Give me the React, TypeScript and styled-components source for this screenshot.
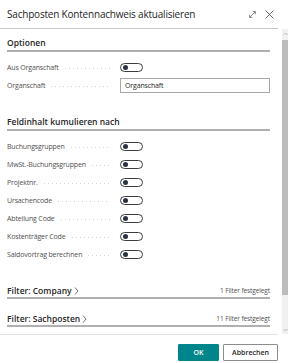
import styled, { createGlobalStyle } from "styled-components";

const GlobalStyle = createGlobalStyle`
  html, body {
    margin: 0;
    padding: 0;
    background: #ffffff;
  }
  body {
    font-family: "Open Sans", "Noto Sans", Arial, sans-serif;
    color: #212121;
  }
`;

const Dialog = styled.div`
  width: 288px;
  height: 363px;
  display: flex;
  flex-direction: column;
  overflow: hidden;
  background: #fff;
`;

const Header = styled.div`
  height: 28px;
  margin-right: 10px;
  padding-left: 7px;
  display: flex;
  align-items: center;
  border-bottom: 1px solid #c8c8c8;
`;

const Title = styled.div`
  flex: 1;
  font-size: 10px;
  letter-spacing: -0.2px;
  color: #262626;
`;

const HeaderIcons = styled.div`
  display: flex;
  align-items: center;
  gap: 9px;
  margin-right: 4px;
`;

const Body = styled.div`
  display: flex;
  height: 305px;
`;

const Content = styled.div`
  flex: 1;
  overflow: hidden;
  padding: 7px 12px 0 7px;
`;

const SectionTitle = styled.div<{ $top: number }>`
  margin-top: ${({ $top }) => $top}px;
  font-size: 8.5px;
  font-weight: 600;
  line-height: 14px;
  color: #262626;
  border-bottom: 2px solid #b0b0b0;
`;

const Rows = styled.div`
  padding-top: 6px;
  display: flex;
  flex-direction: column;
`;

const Row = styled.div`
  height: 18px;
  display: flex;
  align-items: center;
`;

const Label = styled.div`
  width: 113px;
  display: flex;
  align-items: center;
  font-size: 7px;
  letter-spacing: -0.15px;
  color: #505050;
  white-space: nowrap;
`;

const Leader = styled.span`
  flex: 1;
  height: 4px;
  margin: 0 10px 0 6px;
  background-image: linear-gradient(to right, #d2d2d2 1px, transparent 1px);
  background-size: 4px 1px;
  background-repeat: repeat-x;
  background-position: left bottom;
`;

const Toggle = styled.div`
  width: 19px;
  height: 7px;
  border: 1px solid #3c3c3c;
  border-radius: 5px;
  display: flex;
  align-items: center;
  padding-left: 2px;
  box-sizing: content-box;
`;

const Knob = styled.span`
  width: 5px;
  height: 5px;
  border-radius: 50%;
  background: #2b3240;
`;

const Input = styled.div`
  width: 150px;
  height: 15px;
  box-sizing: border-box;
  border: 1px solid #a8a8a8;
  padding-left: 4px;
  display: flex;
  align-items: center;
  font-size: 7px;
  letter-spacing: -0.15px;
  color: #262626;
`;

const FilterRow = styled.div<{ $top: number }>`
  margin-top: ${({ $top }) => $top}px;
  display: flex;
  align-items: center;
  justify-content: space-between;
  line-height: 13px;
  border-bottom: 2px solid #b0b0b0;
`;

const FilterTitle = styled.div`
  display: flex;
  align-items: center;
  gap: 2px;
  font-size: 8.5px;
  font-weight: 600;
  color: #262626;
`;

const FilterCount = styled.div`
  font-size: 6.5px;
  letter-spacing: -0.1px;
  color: #505050;
`;

const Scrollbar = styled.div`
  width: 6px;
  background: #f0f0f0;
  display: flex;
  flex-direction: column;
  align-items: center;
`;

const Thumb = styled.div`
  width: 6px;
  height: 255px;
  margin: 4px 0 33px;
  background: #bcbcbc;
`;

const Footer = styled.div`
  margin-right: 10px;
  border-top: 1px solid #e3e3e3;
  padding-top: 9px;
  display: flex;
  justify-content: flex-end;
  gap: 4px;
`;

const Button = styled.button<{ $primary?: boolean }>`
  height: 17px;
  width: ${({ $primary }) => ($primary ? 41 : 55)}px;
  padding: 0;
  font-family: "Open Sans", "Noto Sans", Arial, sans-serif;
  font-size: 7px;
  font-weight: 600;
  border: 1px solid ${({ $primary }) => ($primary ? "#00858a" : "#8c8c8c")};
  background: ${({ $primary }) => ($primary ? "#00858a" : "#ffffff")};
  color: ${({ $primary }) => ($primary ? "#ffffff" : "#262626")};
  border-radius: 1px;
`;

const toggles = [
  "Buchungsgruppen",
  "MwSt.-Buchungsgruppen",
  "Projektnr.",
  "Ursachencode",
  "Abteilung Code",
  "Kostenträger Code",
  "Saldovortrag berechnen",
];

const Chevron = () => (
  <svg width="5" height="8" viewBox="0 0 5 8" fill="none">
    <path d="M1 0.5 L4 4 L1 7.5" stroke="#555" strokeWidth="0.8" />
  </svg>
);

export default function App() {
  return (
    <Dialog>
      <GlobalStyle />
      <Header>
        <Title>Sachposten Kontennachweis aktualisieren</Title>
        <HeaderIcons>
          <svg width="7" height="7" viewBox="0 0 7 7" fill="none">
            <path d="M0.8 6.2 L6.2 0.8 M3.8 0.6 H6.4 V3.2 M0.6 3.8 V6.4 H3.2" stroke="#666" strokeWidth="0.8" />
          </svg>
          <svg width="9" height="9" viewBox="0 0 9 9" fill="none">
            <path d="M0.5 0.5 L8.5 8.5 M8.5 0.5 L0.5 8.5" stroke="#555" strokeWidth="0.9" />
          </svg>
        </HeaderIcons>
      </Header>
      <Body>
        <Content>
          <SectionTitle $top={0}>Optionen</SectionTitle>
          <Rows>
            <Row>
              <Label>
                Aus Organschaft
                <Leader />
              </Label>
              <Toggle>
                <Knob />
              </Toggle>
            </Row>
            <Row>
              <Label>
                Organschaft
                <Leader />
              </Label>
              <Input>Organschaft</Input>
            </Row>
          </Rows>
          <SectionTitle $top={21}>Feldinhalt kumulieren nach</SectionTitle>
          <Rows>
            {toggles.map((t) => (
              <Row key={t}>
                <Label>
                  {t}
                  <Leader />
                </Label>
                <Toggle>
                  <Knob />
                </Toggle>
              </Row>
            ))}
          </Rows>
          <FilterRow $top={21}>
            <FilterTitle>
              Filter: Company
              <Chevron />
            </FilterTitle>
            <FilterCount>1 Filter festgelegt</FilterCount>
          </FilterRow>
          <FilterRow $top={13}>
            <FilterTitle>
              Filter: Sachposten
              <Chevron />
            </FilterTitle>
            <FilterCount>11 Filter festgelegt</FilterCount>
          </FilterRow>
        </Content>
        <Scrollbar>
          <svg width="5" height="4" viewBox="0 0 5 4" style={{ marginTop: 3 }}>
            <path d="M0.5 3 L2.5 1 L4.5 3" stroke="#999" strokeWidth="0.6" fill="none" />
          </svg>
          <Thumb />
          <svg width="5" height="4" viewBox="0 0 5 4">
            <path d="M0.5 1 L2.5 3 L4.5 1" stroke="#999" strokeWidth="0.6" fill="none" />
          </svg>
        </Scrollbar>
      </Body>
      <Footer>
        <Button $primary>OK</Button>
        <Button>Abbrechen</Button>
      </Footer>
    </Dialog>
  );
}
